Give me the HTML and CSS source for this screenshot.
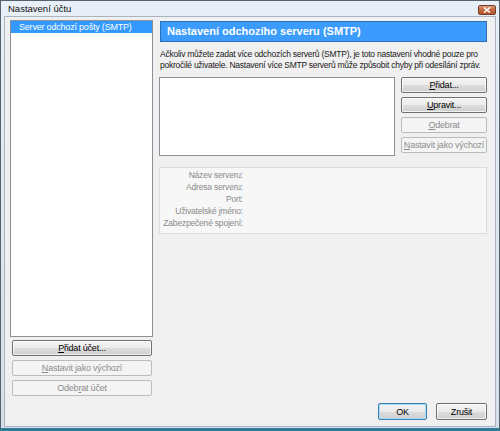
FILE: index.html
```html
<!DOCTYPE html>
<html lang="cs">
<head>
    <meta charset="UTF-8">
    <title>Nastavení účtu</title>
    <link rel="stylesheet" href="styles.css">
</head>
<body>
    <div class="window">
        <div class="titlebar">
            <span class="title">Nastavení účtu</span>
            <span class="close-btn">
                <svg width="8" height="6" viewBox="0 0 8 6">
                    <path d="M1 0.5 L7 5.5 M7 0.5 L1 5.5" stroke="#fff" stroke-width="1.6" />
                </svg>
            </span>
        </div>

        <div class="client">
            <!-- seznam účtů -->
            <div class="accounts">
                <div class="account-list">
                    <div class="account-item selected">Server odchozí pošty (SMTP)</div>
                </div>
                <button class="btn"><u>P</u>řidat účet...</button>
                <button class="btn" disabled><u>N</u>astavit jako výchozí</button>
                <button class="btn" disabled>Odeb<u>r</u>at účet</button>
            </div>

            <!-- nastavení SMTP -->
            <div class="panel">
                <div class="panel-header">Nastavení odchozího serveru (SMTP)</div>
                <p class="panel-desc">Ačkoliv můžete zadat více odchozích serverů (SMTP), je toto nastavení vhodné pouze pro
                    pokročilé uživatele. Nastavení více SMTP serverů může způsobit chyby při odesílání zpráv.</p>

                <div class="server-row">
                    <div class="server-list"></div>
                    <div class="server-buttons">
                        <button class="btn"><u>P</u>řidat...</button>
                        <button class="btn"><u>U</u>pravit...</button>
                        <button class="btn" disabled><u>O</u>debrat</button>
                        <button class="btn" disabled><u>N</u>astavit jako výchozí</button>
                    </div>
                </div>

                <div class="server-details">
                    <span class="detail-label">Název serveru:</span><span></span>
                    <span class="detail-label">Adresa serveru:</span><span></span>
                    <span class="detail-label">Port:</span><span></span>
                    <span class="detail-label">Uživatelské jméno:</span><span></span>
                    <span class="detail-label">Zabezpečené spojení:</span><span></span>
                </div>

                <div class="dialog-buttons">
                    <button class="btn btn-default">OK</button>
                    <button class="btn btn-cancel">Zrušit</button>
                </div>
            </div>
        </div>
    </div>
</body>
</html>
```

FILE: styles.css
```css
* {
    margin: 0;
    padding: 0;
    box-sizing: border-box;
}

body {
    font-family: "Liberation Sans", Arial, sans-serif;
    font-size: 9px;
    letter-spacing: -0.2px;
    color: #000;
    background: #2f7c99;
}

.window {
    width: 500px;
    height: 431px;
    display: flex;
    flex-direction: column;
    border: 1px solid #56616c;
    border-bottom: 3px solid #2f7c99;
    background: linear-gradient(#e9eff6, #d5dfea);
    padding: 0 3px 1px;
}

.titlebar {
    height: 15px;
    display: flex;
    align-items: center;
    justify-content: space-between;
    padding: 0 0 0 4px;
}

.title {
    font-size: 9.5px;
    letter-spacing: 0;
    color: #111;
}

.close-btn {
    width: 18px;
    height: 10px;
    margin-top: 2px;
    display: flex;
    align-items: center;
    justify-content: center;
    border: 1px solid #6e3f2c;
    border-radius: 2px;
    background: linear-gradient(#dc9a78, #c4653d 50%, #b8552e);
}

.client {
    flex: 1;
    display: flex;
    gap: 6px;
    background: #f0f0f0;
    border: 1px solid #a9b4c0;
    padding: 3px 8px 6px 5px;
}

/* levý sloupec */
.accounts {
    width: 143px;
    display: flex;
    flex-direction: column;
}

.account-list {
    height: 317px;
    background: #fff;
    border: 1px solid #8a9096;
    margin-bottom: 3px;
}

.account-item {
    height: 12px;
    line-height: 12px;
    padding-left: 8px;
    color: #fff;
}

.account-item.selected {
    background: #3399ff;
}

.accounts .btn {
    margin: 0 1px 4px 2px;
}

/* tlačítka */
.btn {
    height: 16px;
    padding: 0;
    white-space: nowrap;
    font-family: inherit;
    font-size: 9px;
    letter-spacing: -0.2px;
    color: #000;
    border: 1px solid #707070;
    border-radius: 2px;
    background: linear-gradient(#f3f3f3, #ebebeb 50%, #dddddd 51%, #cfcfcf);
    box-shadow: inset 0 0 0 1px rgba(255, 255, 255, 0.7);
}

.btn u {
    text-decoration: underline;
}

.btn:disabled {
    color: #8d8d8d;
    border-color: #b9bcbf;
    background: #f4f4f4;
    box-shadow: none;
}

/* pravý panel */
.panel {
    flex: 1;
    display: flex;
    flex-direction: column;
}

.panel-header {
    height: 21px;
    margin: 1px 0 0 1px;
    padding-left: 6px;
    line-height: 19px;
    font-size: 11px;
    font-weight: bold;
    letter-spacing: 0;
    color: #fff;
    background: #3c9cfd;
    border: 1px solid #2c6fb7;
}

.panel-desc {
    margin-top: 7px;
    padding-left: 1px;
    line-height: 11px;
    font-size: 8.5px;
    letter-spacing: -0.25px;
    color: #1a1a1a;
}

.server-row {
    display: flex;
    gap: 6px;
    margin-top: 6px;
}

.server-list {
    width: 236px;
    height: 79px;
    background: #fff;
    border: 1px solid #8a9096;
}

.server-buttons {
    flex: 1;
    display: flex;
    flex-direction: column;
    gap: 4px;
}

.server-details {
    display: grid;
    grid-template-columns: 83px 1fr;
    grid-auto-rows: 12px;
    margin-top: 11px;
    height: 67px;
    padding-top: 1px;
    background: #f7f7f7;
    border: 1px solid #dcdcdc;
}

.detail-label {
    text-align: right;
    white-space: nowrap;
    line-height: 12px;
    font-size: 8.5px;
    color: #8a8a8a;
}

.dialog-buttons {
    margin-top: auto;
    display: flex;
    justify-content: flex-end;
    gap: 9px;
}

.dialog-buttons .btn {
    height: 17px;
}

.btn-default {
    width: 49px;
    border-color: #3c7fb1;
    box-shadow: inset 0 0 0 1px #a8dcf4;
}

.btn-cancel {
    width: 51px;
}
```
